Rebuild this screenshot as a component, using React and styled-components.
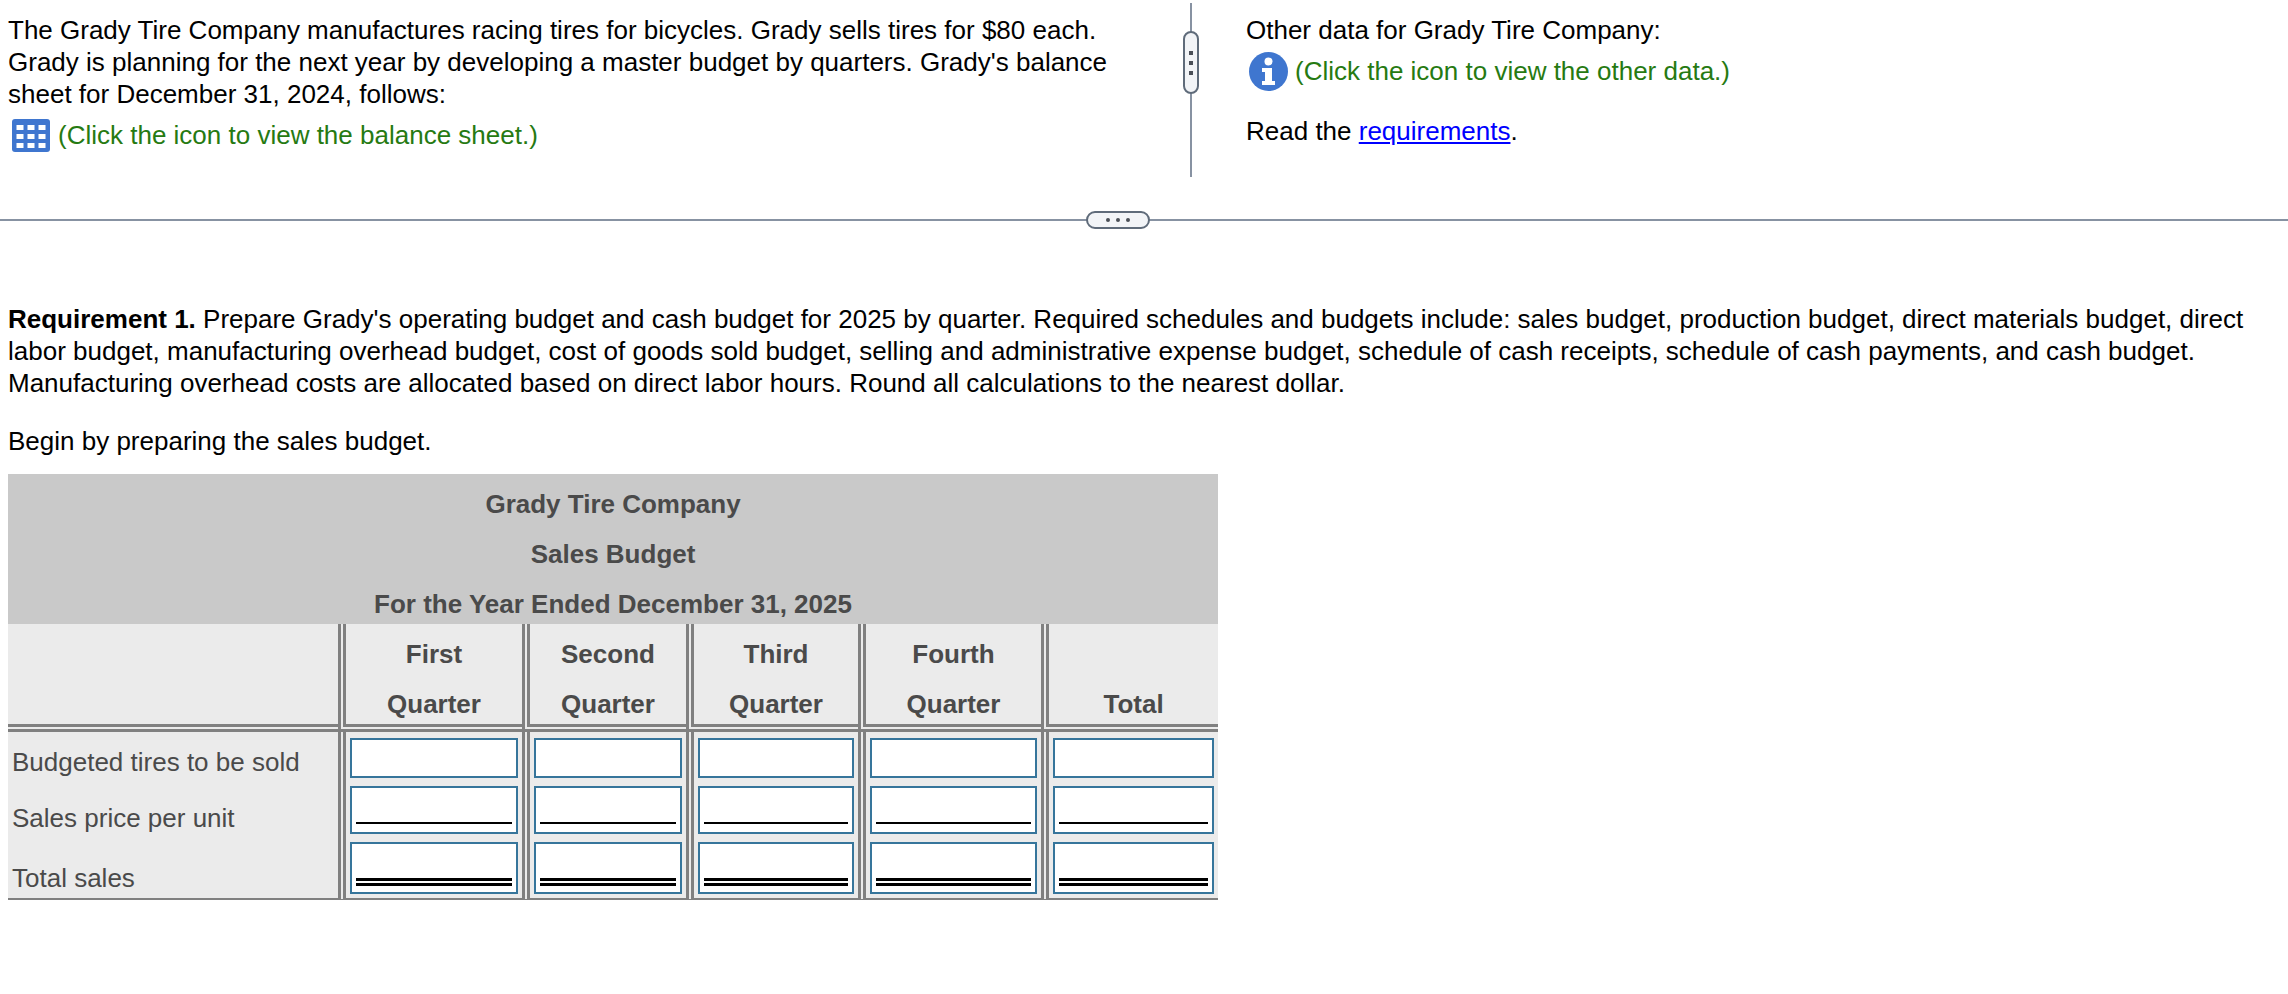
import React from 'react';
import styled, { createGlobalStyle } from 'styled-components';

const GlobalStyle = createGlobalStyle`
  html, body {
    margin: 0;
    padding: 0;
    background: #fff;
    color: #000;
    font-family: "Liberation Sans", Arial, sans-serif;
    font-size: 26px;
  }
`;

const Page = styled.div`
  width: 2288px;
  height: 994px;
`;

const TopPanes = styled.div`
  position: relative;
  display: flex;
  height: 219px;
  border-bottom: 2px solid #8792a2;
`;

const LeftPane = styled.div`
  width: 1190px;
  box-sizing: border-box;
  padding: 14px 8px 0;
`;

const RightPane = styled.div`
  flex: 1;
  padding: 14px 0 0 54px;
`;

const PaneDivider = styled.div`
  position: relative;
  width: 2px;
  height: 174px;
  margin-top: 3px;
  background: #8792a2;
`;

const Paragraph = styled.p`
  margin: 0;
  line-height: 32px;
  width: 1130px;
`;

const PaneTitle = styled.div`
  line-height: 32px;
`;

const IconLine = styled.div`
  display: flex;
  align-items: center;
  gap: ${p => p.$gap}px;
  margin: 5px 0 0 ${p => p.$left}px;
  color: #267a12;
  line-height: 40px;
`;

const ReadLine = styled.div`
  margin-top: 20px;
  line-height: 40px;
`;

const Link = styled.a`
  color: #00f;
  text-decoration: underline;
`;

const VerticalHandle = styled.div`
  position: absolute;
  left: -7px;
  top: 28px;
  width: 16px;
  height: 63px;
  box-sizing: border-box;
  border: 2px solid #5f6b7a;
  border-radius: 9px;
  background: #f2f4f7;
  display: flex;
  flex-direction: column;
  align-items: center;
  justify-content: center;
  gap: 6px;
`;

const SquareDot = styled.span`
  width: 4px;
  height: 4px;
  background: #4a4f57;
`;

const HorizontalHandle = styled.div`
  position: absolute;
  left: 1086px;
  bottom: -10px;
  width: 64px;
  height: 18px;
  box-sizing: border-box;
  border: 2px solid #5f6b7a;
  border-radius: 9px;
  background: #f2f4f7;
  display: flex;
  align-items: center;
  justify-content: center;
  gap: 6px;
`;

const RoundDot = styled.span`
  width: 4px;
  height: 4px;
  border-radius: 50%;
  background: #4a4f57;
`;

const Requirement = styled.section`
  padding: 82px 8px 0;
`;

const RequirementText = styled.p`
  margin: 0;
  line-height: 32px;
`;

const BeginText = styled.p`
  margin: 27px 0 17px;
  line-height: 31px;
`;

const BudgetTable = styled.table`
  table-layout: fixed;
  width: 1210px;
  border-collapse: separate;
  border-spacing: 0;
  color: #4a4a4a;
`;

const TitleCell = styled.th`
  height: 50px;
  padding: 10px 0 0;
  box-sizing: border-box;
  background: #c9c9c9;
  font-weight: bold;
  text-align: center;
  line-height: 40px;
`;

const HeadCell = styled.th`
  padding: 5px 4px 0;
  background: #ebebeb;
  border-bottom: 8px double #808080;
  border-left: ${p => (p.$first ? 'none' : '8px double #808080')};
  font-weight: bold;
  text-align: center;
  vertical-align: top;
  line-height: 50px;
`;

const HeadText = styled.div`
  margin-bottom: -5px;
`;

const LabelCell = styled.td`
  padding: 0 0 0 4px;
  background: #ebebeb;
  vertical-align: bottom;
  line-height: 40px;
  border-bottom: ${p => (p.$last ? '2px solid #808080' : 'none')};
`;

const ValueCell = styled.td`
  padding: ${p => p.$top}px 4px 4px;
  background: #ebebeb;
  vertical-align: bottom;
  border-left: 8px double #808080;
  border-bottom: ${p => (p.$last ? '2px solid #808080' : 'none')};
`;

const AmountBox = styled.div`
  box-sizing: border-box;
  height: ${p => p.$height}px;
  padding: 0 4px ${p => p.$gapBelow}px;
  border: 2px solid #36759b;
  background: #fff;
  display: flex;
  align-items: flex-end;
`;

const AmountInput = styled.input`
  display: block;
  width: 100%;
  min-width: 0;
  height: 100%;
  box-sizing: border-box;
  padding: 0;
  border: none;
  outline: none;
  background: transparent;
  border-bottom: ${p => p.$rule || 'none'};
  font: inherit;
  text-align: right;
`;

const TableIcon = () => (
  <svg width="38" height="33" viewBox="0 0 38 33">
    <defs>
      <filter id="soft" x="-20%" y="-20%" width="140%" height="140%">
        <feGaussianBlur stdDeviation="0.7" />
      </filter>
    </defs>
    <rect width="38" height="33" rx="3" fill="#3f76cf" />
    <g fill="#fff" filter="url(#soft)">
      {[6, 15, 24].map(y =>
        [4.5, 15.5, 26.5].map(x => <rect key={`${x}-${y}`} x={x} y={y} width="7" height="5" />)
      )}
    </g>
  </svg>
);

const InfoIcon = () => (
  <svg width="39" height="39" viewBox="0 0 39 39">
    <circle cx="19.5" cy="19.5" r="19.5" fill="#3f76cf" />
    <circle cx="19.5" cy="9.5" r="4" fill="#fff" />
    <path d="M13 16h10v13h3v4H13v-4h3v-9h-3z" fill="#fff" />
  </svg>
);

const columns = ['First', 'Second', 'Third', 'Fourth', ''];
const bottoms = ['Quarter', 'Quarter', 'Quarter', 'Quarter', 'Total'];
const rows = [
  { label: 'Budgeted tires to be sold', top: 6, height: 40, gapBelow: 0, rule: 'none' },
  { label: 'Sales price per unit', top: 4, height: 48, gapBelow: 8, rule: '2px solid #000' },
  { label: 'Total sales', top: 4, height: 52, gapBelow: 6, rule: '8px double #000', last: true },
];

export default function App() {
  return (
    <Page>
      <GlobalStyle />
      <TopPanes>
        <LeftPane>
          <Paragraph>
            The Grady Tire Company manufactures racing tires for bicycles. Grady sells tires for $80 each.
            Grady is planning for the next year by developing a master budget by quarters. Grady's balance
            sheet for December 31, 2024, follows:
          </Paragraph>
          <IconLine $left={4} $gap={8}>
            <TableIcon />
            (Click the icon to view the balance sheet.)
          </IconLine>
        </LeftPane>
        <PaneDivider>
          <VerticalHandle>
            <SquareDot />
            <SquareDot />
            <SquareDot />
          </VerticalHandle>
        </PaneDivider>
        <RightPane>
          <PaneTitle>Other data for Grady Tire Company:</PaneTitle>
          <IconLine $left={3} $gap={7}>
            <InfoIcon />
            (Click the icon to view the other data.)
          </IconLine>
          <ReadLine>
            Read the <Link href="#requirements">requirements</Link>.
          </ReadLine>
        </RightPane>
        <HorizontalHandle>
          <RoundDot />
          <RoundDot />
          <RoundDot />
        </HorizontalHandle>
      </TopPanes>
      <Requirement>
        <RequirementText>
          <strong>Requirement 1.</strong> Prepare Grady's operating budget and cash budget for 2025 by quarter.
          Required schedules and budgets include: sales budget, production budget, direct materials budget, direct
          labor budget, manufacturing overhead budget, cost of goods sold budget, selling and administrative expense
          budget, schedule of cash receipts, schedule of cash payments, and cash budget. Manufacturing overhead costs
          are allocated based on direct labor hours. Round all calculations to the nearest dollar.
        </RequirementText>
        <BeginText>Begin by preparing the sales budget.</BeginText>
        <BudgetTable>
          <colgroup>
            <col width="330" />
            <col width="184" />
            <col width="164" />
            <col width="172" />
            <col width="183" />
            <col width="177" />
          </colgroup>
          <thead>
            <tr><TitleCell colSpan={6}>Grady Tire Company</TitleCell></tr>
            <tr><TitleCell colSpan={6}>Sales Budget</TitleCell></tr>
            <tr><TitleCell colSpan={6}>For the Year Ended December 31, 2025</TitleCell></tr>
            <tr>
              <HeadCell $first />
              {columns.map((top, i) => (
                <HeadCell key={i}>
                  <HeadText>
                    {top || '\u00a0'}
                    <br />
                    {bottoms[i]}
                  </HeadText>
                </HeadCell>
              ))}
            </tr>
          </thead>
          <tbody>
            {rows.map(row => (
              <tr key={row.label}>
                <LabelCell $last={row.last}>{row.label}</LabelCell>
                {columns.map((_, i) => (
                  <ValueCell key={i} $last={row.last} $top={row.top}>
                    <AmountBox $height={row.height} $gapBelow={row.gapBelow}>
                      <AmountInput $rule={row.rule} aria-label={row.label} />
                    </AmountBox>
                  </ValueCell>
                ))}
              </tr>
            ))}
          </tbody>
        </BudgetTable>
      </Requirement>
    </Page>
  );
}
